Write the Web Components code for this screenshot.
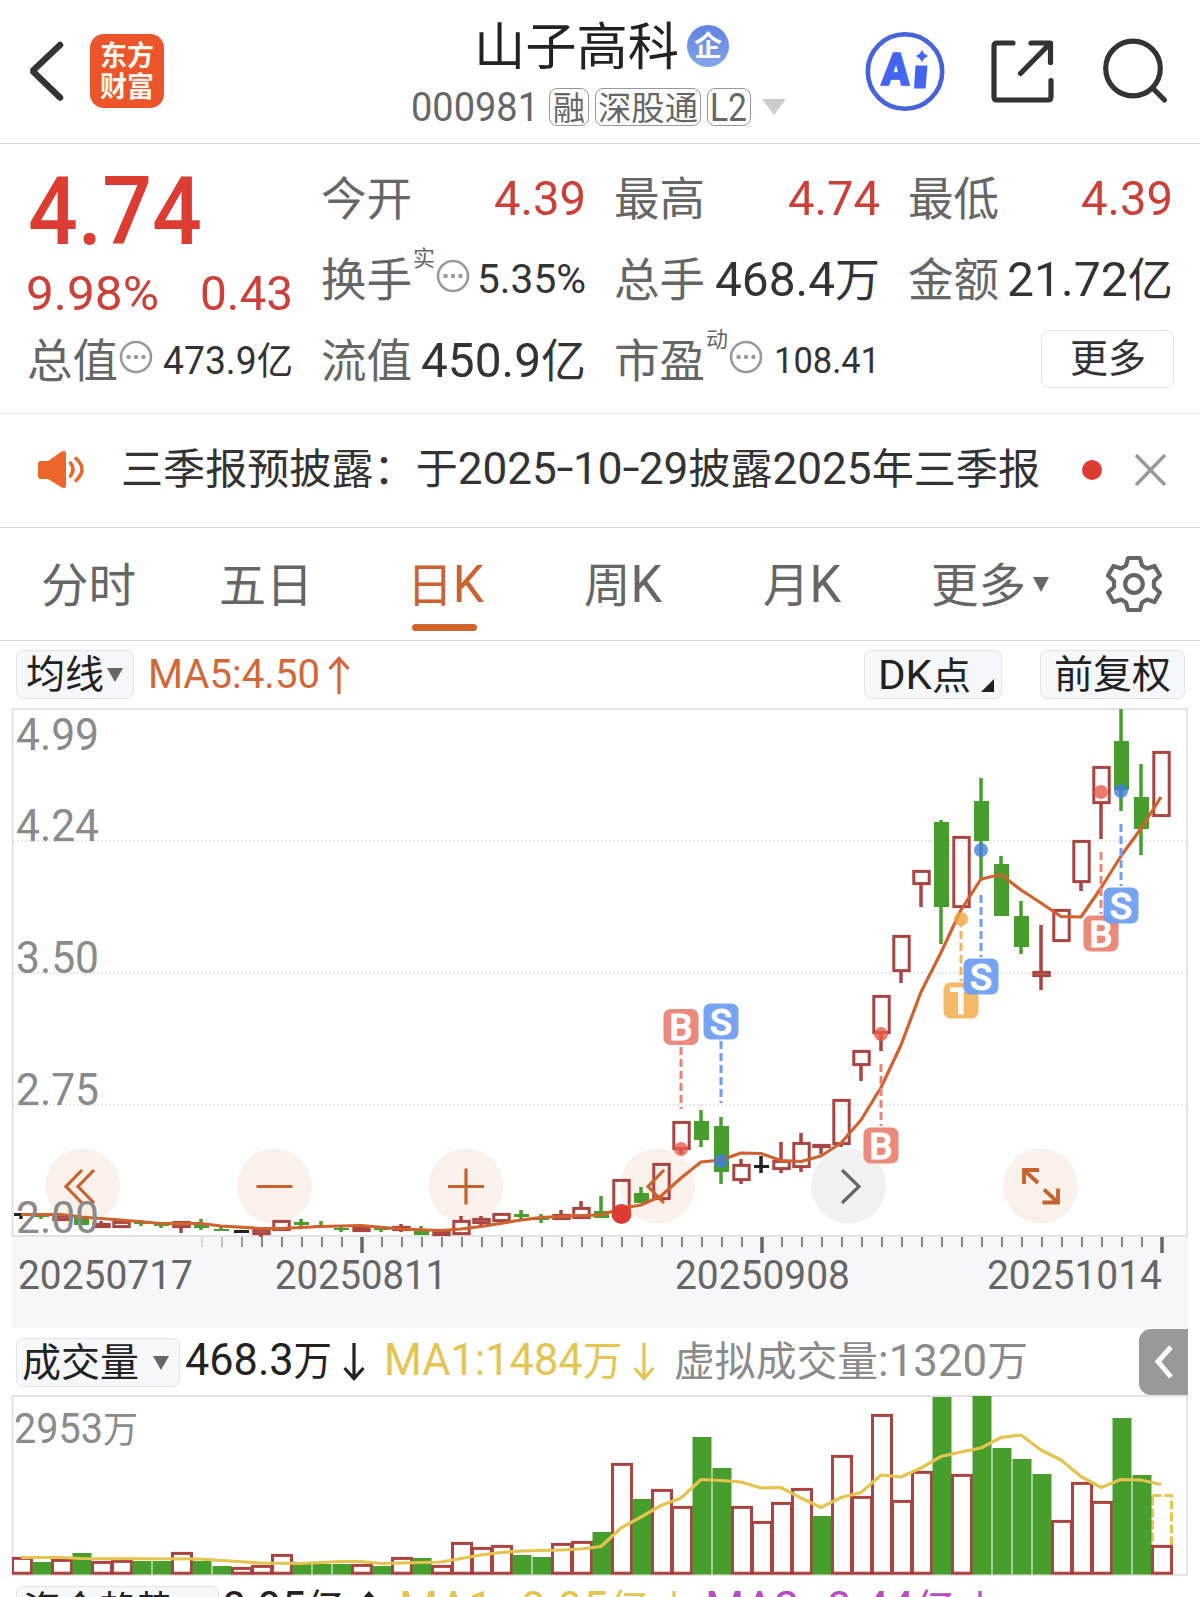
<!DOCTYPE html>
<html lang="zh-CN">
<head>
<meta charset="UTF-8">
<title>山子高科 000981</title>
<style>
  body {
    margin: 0;
    width: 1200px;
    height: 1597px;
    overflow: hidden;
    background: #fff;
    color: #333;
    font-family: Roboto, "Noto Sans CJK SC", sans-serif;
  }
</style>
</head>
<body>
<stock-app></stock-app>

<script>
const define = (name, cls) => window.customElements.define(name, cls);

// Text set to an exact line width. Digits and latin letters are drawn slightly
// larger than the Chinese characters beside them.
class FitText extends HTMLElement {
  constructor() {
    super();
    this.attachShadow({ mode: "open" });
  }
  connectedCallback() {
    const w = +this.getAttribute("w");
    const size = +this.getAttribute("size");
    const latin = +(this.getAttribute("latin") || size);
    const source = this.getAttribute("text");
    const parts = source.split(/([\x20-\x7e]+)/).filter(Boolean);
    const dy = this.getAttribute("dy") || (/[\x20-\x7e]/.test(source) ? 0 : size * 0.028);
    const mark = p => `<span class="latin">${p.replace(/-/g, '<span class="dash">-</span>')}</span>`;
    this.shadowRoot.innerHTML = `
      <style>
        :host { display: inline-block; flex: none; width: ${w}px; height: ${size}px; white-space: nowrap; line-height: ${size}px; font-size: ${size}px; }
        .line { display: inline-block; transform-origin: 0 50%; }
        .latin { font-size: ${latin}px; line-height: 0; }
        .dash { display: inline-block; padding: 0 .045em; transform: translateY(-.03em) scaleX(1.4); }
      </style>
      <span class="line">${parts.map(p => /[\x20-\x7e]/.test(p) ? mark(p) : p).join("")}</span>
    `;
    const line = this.shadowRoot.querySelector(".line");
    line.style.transform = `translateY(${dy}px) scaleX(${w / line.getBoundingClientRect().width})`;
  }
}
define("fit-text", FitText);

class StockHeader extends HTMLElement {
  constructor() {
    super();
    this.attachShadow({ mode: "open" }).innerHTML = `
      <style>
        :host { display: flex; height: 144px; border-bottom: 1px solid #d6d6d6; box-sizing: border-box; color: #222; }
        .left { display: flex; align-items: center; width: 400px; padding: 0 0 1px 26px; box-sizing: border-box; }
        .logo { display: grid; place-content: center; justify-items: center; gap: 3px; width: 74px; height: 74px; margin-left: 22px; border-radius: 14px; background: #eb5529; color: #fff8ef; font-weight: 700; }
        .mid { width: 400px; }
        .name { display: flex; align-items: center; height: 54px; padding: 19px 0 0 74px; }
        .badge { display: grid; place-items: center; width: 42px; height: 42px; margin-left: 8px; border-radius: 50%; background: linear-gradient(#6080e0, #83a6e9); color: #fff; font-weight: 700; }
        .code { display: flex; align-items: center; height: 40px; padding: 14px 0 0 11px; color: #666; }
        .tag { display: grid; place-items: center; height: 36px; border: 1.5px solid #999; border-radius: 8px; margin-right: 6px; }
        .right { display: flex; align-items: center; padding-left: 64px; }
      </style>
      <div class="left">
        <svg width="42" height="62" viewBox="26.500 40 42 62" fill="none" stroke="#333" stroke-width="6.5" stroke-linecap="round" stroke-linejoin="bevel"><path d="M60.5 45 33 71 60.5 97.5"/></svg>
        <div class="logo"><fit-text text="东方" size="28" w="54"></fit-text><fit-text text="财富" size="28" w="54"></fit-text></div>
      </div>
      <div class="mid">
        <div class="name"><fit-text text="山子高科" size="51" w="205" dy="0.5"></fit-text><div class="badge"><fit-text text="企" size="28" w="28"></fit-text></div></div>
        <div class="code">
          <fit-text text="000981" size="41" w="128"></fit-text>
          <div class="tag" style="width:38px;margin-left:9.500px"><fit-text text="融" size="33" w="32"></fit-text></div>
          <div class="tag" style="width:104px"><fit-text text="深股通" size="33" w="100"></fit-text></div>
          <div class="tag" style="width:42px;margin-right:11px"><fit-text text="L2" size="38" w="37"></fit-text></div>
          <svg width="24" height="16"><path d="M0 0h24L12 16z" fill="#ccc"/></svg>
        </div>
      </div>
      <div class="right">
        <svg width="310" height="86" viewBox="864 28.500 310 86" fill="none" stroke="#333" stroke-width="5.2">
          <circle cx="905" cy="71" r="37.2" stroke="#4763d6" stroke-width="4.6"/>
          <text x="881" y="85" textLength="28" lengthAdjust="spacingAndGlyphs" font-size="45" font-weight="900" fill="#4364f0" stroke="#4364f0" stroke-width="1.500" transform="skewX(-3) translate(4.5 0)">A</text>
          <path d="M915.500 65H927.500L925.500 88H914z" fill="#4364f0" stroke="none"/>
          <path d="M922 49q1.500 5 6.500 6.500-5 1.500-6.500 6.500-1.500-5-6.500-6.500 5-1.500 6.500-6.500z" fill="#4364f0" stroke="none"/>
          <g stroke-linecap="round" stroke-linejoin="round">
            <path d="M1013 42.500H997q-3 0-3 3V96.500q0 3 3 3h51q3 0 3-3V80M1031 42.500h19.500V62M1050 43 1020.500 73"/>
            <circle cx="1133" cy="68" r="27.300"/>
            <path d="M1153 88l11.500 11.500"/>
          </g>
        </svg>
      </div>
    `;
  }
}
define("stock-header", StockHeader);

// One label / value pair of the quote table
class QuoteCell extends HTMLElement {
  constructor() {
    super();
    this.attachShadow({ mode: "open" });
  }
  connectedCallback() {
    const a = n => this.getAttribute(n);
    this.shadowRoot.innerHTML = `
      <style>
        :host { display: flex; align-items: center; height: 81px; color: #333; }
        .label { color: #666; margin: -1px 0 0 -0.500px; }
        .note { color: #666; align-self: flex-start; margin: 8px 0 0 1px; }
        svg { margin: -7px 0 0 1px; flex: none; }
        .value { margin-left: auto; }
        .up { color: #cb4038; }
      </style>
      <fit-text class="label" text="${a("label")}" size="46" w="91"></fit-text>
      ${a("note") ? `<fit-text class="note" text="${a("note")}" size="22" w="22"></fit-text>` : ""}
      ${this.hasAttribute("info") ? `<svg width="34" height="34" fill="#999"><circle cx="17" cy="17" r="15" fill="none" stroke="#999" stroke-width="2.600"/><circle cx="9.600" cy="17" r="2.200"/><circle cx="17" cy="17" r="2.200"/><circle cx="24.400" cy="17" r="2.200"/></svg>` : ""}
      <fit-text class="value ${a("tone") || ""}" text="${a("value")}" size="${a("size") || 46}" latin="${a("latin") || 49}" w="${a("w")}"></fit-text>
    `;
  }
}
define("quote-cell", QuoteCell);

class StockQuote extends HTMLElement {
  constructor() {
    super();
    this.attachShadow({ mode: "open" }).innerHTML = `
      <style>
        :host { display: grid; grid-template-columns: repeat(4, 265px); column-gap: 28.500px; grid-auto-rows: 81px; height: 270px; padding: 14px 26px 0 27.500px; box-sizing: border-box; border-bottom: 1.500px solid #ebebeb; }
        .price { grid-row: span 2; color: #dc3c32; }
        .big { display: flex; align-items: center; height: 107px; font-weight: 500; }
        .chg { display: flex; align-items: center; justify-content: space-between; height: 56px; color: #cb4038; }
        .more { display: grid; place-items: center; align-self: start; justify-self: end; width: 131px; height: 56px; margin: 10px -1px 0 0; border: 1.500px solid #e3e3e3; border-radius: 8px; }
      </style>
      <div class="price">
        <div class="big"><fit-text text="4.74" size="94" w="174"></fit-text></div>
        <div class="chg"><fit-text text="9.98%" size="49" w="133" style="margin-left:-2px"></fit-text><fit-text text="0.43" size="49" w="93"></fit-text></div>
      </div>
      <quote-cell label="今开" value="4.39" tone="up" w="92"></quote-cell>
      <quote-cell label="最高" value="4.74" tone="up" w="92"></quote-cell>
      <quote-cell label="最低" value="4.39" tone="up" w="92"></quote-cell>
      <quote-cell label="换手" note="实" info value="5.35%" size="41" latin="41" w="109"></quote-cell>
      <quote-cell label="总手" value="468.4万" w="165"></quote-cell>
      <quote-cell label="金额" value="21.72亿" w="166"></quote-cell>
      <quote-cell label="总值" info value="473.9亿" size="38" latin="39" w="130"></quote-cell>
      <quote-cell label="流值" value="450.9亿" w="165"></quote-cell>
      <quote-cell label="市盈" note="动" info value="108.41" size="37" latin="37" w="106"></quote-cell>
      <div class="more"><fit-text text="更多" size="39" w="76" dy="-0.5"></fit-text></div>
    `;
  }
}
define("stock-quote", StockQuote);

class NoticeBar extends HTMLElement {
  constructor() {
    super();
    this.attachShadow({ mode: "open" }).innerHTML = `
      <style>
        :host { display: flex; align-items: center; height: 114px; box-sizing: border-box; padding: 0 34px 2px 36px; border-bottom: 1px solid #d6d8da; }
        fit-text { margin-left: 35px; }
        .dot { width: 20px; height: 20px; margin: 0 33px 0 auto; border-radius: 50%; background: #dc3c32; }
      </style>
      <svg width="50" height="42" viewBox="36 449 50 42" fill="none" stroke="#ec662c" stroke-width="3.600" stroke-linecap="round">
        <path d="M41 461h7l13-9q5-3 5 2v31q0 5-5 2l-13-8h-7q-3 0-3-3v-12q0-3 3-3z" fill="#ec662c" stroke="none"/>
        <path d="M70.500 463q5 6.500 0 13M76 458.500q12 11 0 22"/>
      </svg>
      <fit-text text="三季报预披露：于2025-10-29披露2025年三季报" size="42" latin="44" w="919"></fit-text>
      <div class="dot"></div>
      <svg width="31" height="32" stroke="#999" stroke-width="3.500"><path d="M1 1 30 31M30 1 1 31"/></svg>
    `;
  }
}
define("notice-bar", NoticeBar);

class PeriodTabs extends HTMLElement {
  constructor() {
    super();
    const tabs = [["分时", 41, 95], ["五日", 219, 94], ["日K", 407, 77], ["周K", 584, 78], ["月K", 763, 78], ["更多", 931, 95]];
    let x = 0;
    this.attachShadow({ mode: "open" }).innerHTML = `
      <style>
        :host { display: flex; align-items: center; height: 113px; box-sizing: border-box; border-bottom: 1px solid #d6d8da; color: #666; }
        .tab { position: relative; height: 48px; display: flex; }
        .active { color: #cb622f; }
        .active::after { content: ""; position: absolute; left: 5px; bottom: -23px; width: 65px; height: 7px; border-radius: 4px; background: #d0622c; }
      </style>
      ${tabs.map(([text, left, w]) => {
        const gap = left - x;
        x = left + w;
        return `<div class="tab ${text === "日K" ? "active" : ""}" style="margin-left:${gap}px"><fit-text text="${text}" size="47" latin="51" w="${w}" dy="1.5"></fit-text></div>`;
      }).join("")}
      <svg width="18" height="15" style="margin-left:6px"><path d="M1 0h16L9 15z" fill="#666"/></svg>
      <svg width="60" height="60" viewBox="-30 -30 60 60" style="margin-left:54px" fill="none" stroke="#666" stroke-width="4.200" stroke-linejoin="round">
        <path d="M-6-26H6L8-18.500 13-15.500 20.500-18 26-8.500 20-3V3L26 8.500 20.500 18 13 15.500 8 18.500 6 26H-6L-8 18.500-13 15.500-20.500 18-26 8.500-20 3V-3L-26-8.500-20.500-18-13-15.500-8-18.500z"/>
        <circle r="8.800"/>
      </svg>
    `;
  }
}
define("period-tabs", PeriodTabs);

// Grey pill button used above the charts
class PillButton extends HTMLElement {
  constructor() {
    super();
    this.attachShadow({ mode: "open" }).innerHTML = `
      <style>
        :host { display: flex; align-items: center; flex: none; box-sizing: border-box; height: 49px; border: 1.500px solid #e1e4e8; border-radius: 7px; background: #f6f7fa; color: #222; }
      </style>
      <slot></slot>
    `;
  }
}
define("pill-button", PillButton);

const down = '<svg width="16" height="14" style="flex:none"><path d="M0 0h16L8 14z" fill="#666"/></svg>';
const arrow = (color, up) => `<svg class="arrow" width="22" height="38" fill="none" stroke="${color}" stroke-width="3.200"><path d="${up ? "M11 38V3M1.500 13 11 2.500 20.500 13" : "M11 0V35M1.500 25 11 35.500 20.500 25"}"/></svg>`;

class ChartToolbar extends HTMLElement {
  constructor() {
    super();
    this.attachShadow({ mode: "open" }).innerHTML = `
      <style>
        :host { display: flex; align-items: center; height: 67px; box-sizing: border-box; padding: 0 15px 0 16px; }
        .ma { margin-left: 14px; color: #d2683a; }
        .arrow { margin: 0 0 0 8px; }
        .dk { margin-left: auto; }
        .corner { align-self: flex-end; margin: 0 0 6px 10px; }
      </style>
      <pill-button style="width:118px;padding-left:9px"><fit-text text="均线" size="39" w="78"></fit-text><span style="margin:1px 0 0 3px;line-height:0">${down}</span></pill-button>
      <fit-text class="ma" text="MA5:4.50" size="41" w="172" dy="-0.5"></fit-text>
      ${arrow("#d2683a", true)}
      <pill-button class="dk" style="width:138px;padding-left:13px"><fit-text text="DK点" size="38" latin="41" w="93" dy="0.5"></fit-text><svg class="corner" width="13" height="13"><path d="M13 0v13H0z" fill="#222"/></svg></pill-button>
      <pill-button style="width:145px;margin-left:38.500px;padding-left:13px"><fit-text text="前复权" size="39" w="117"></fit-text></pill-button>
    `;
  }
}
define("chart-toolbar", ChartToolbar);

const RED = "#a94440";
const GREEN = "#489e2d";
const cx = i => 21.5 + 20 * i;
const polyline = (pts, stroke) => `<polyline points="${pts.map(([i, y]) => `${cx(i) - 0.5},${y}`).join(" ")}" fill="none" stroke="${stroke}" stroke-width="3.200" stroke-linejoin="round"/>`;

// type, body top, body bottom, wick high, wick low
// r = rising (hollow), g = falling, k = unchanged
const candles = [
  ["k", 1213, 1216, 1213, 1219], ["g", 1214, 1217, 1214, 1219], ["r", 1215, 1221], ["g", 1217, 1225],
  ["r", 1223, 1228, 1221, 1228], ["r", 1221, 1228], ["g", 1222, 1224, 1220, 1226], ["g", 1224, 1226, 1223, 1228],
  ["r", 1221, 1228, 1221, 1233], ["g", 1223, 1228, 1219, 1230], ["g", 1229, 1231, 1226, 1231], ["k", 1230, 1233],
  ["r", 1229, 1235, 1229, 1237], ["r", 1220, 1231], ["g", 1222, 1225, 1219, 1226], ["g", 1225, 1227, 1221, 1227],
  ["g", 1228, 1230, 1226, 1232], ["r", 1227, 1232], ["g", 1228, 1230, 1226, 1232], ["r", 1226, 1231, 1224, 1232],
  ["g", 1229, 1235, 1226, 1235], ["r", 1231, 1236], ["r", 1220, 1235, 1216, 1235], ["r", 1218, 1224, 1216, 1226],
  ["r", 1213, 1222], ["g", 1214, 1217, 1210, 1220], ["g", 1217, 1220, 1214, 1223], ["r", 1214, 1220, 1210, 1220],
  ["r", 1207, 1219, 1201, 1219], ["g", 1211, 1218, 1196, 1218], ["r", 1179, 1212], ["g", 1193, 1203, 1187, 1203],
  ["r", 1163, 1200], ["r", 1121, 1150, 1121, 1154], ["g", 1121, 1140, 1110, 1147], ["g", 1126, 1172, 1117, 1184],
  ["r", 1164, 1181, 1159, 1184], ["k", 1165, 1168, 1156, 1173], ["r", 1160, 1170, 1142, 1173], ["r", 1142, 1168, 1133, 1172],
  ["r", 1144, 1148, 1144, 1154], ["r", 1099, 1145, 1099, 1147], ["r", 1050, 1066, 1050, 1081], ["r", 995, 1034, 995, 1051],
  ["r", 935, 972, 935, 983], ["r", 870, 885, 870, 907], ["g", 822, 907, 820, 944], ["r", 836, 908],
  ["g", 801, 841, 778, 881], ["g", 864, 916, 856, 916], ["g", 916, 947, 901, 954], ["r", 971, 977, 925, 990],
  ["r", 909, 942], ["r", 840, 883, 840, 891], ["r", 766, 804, 766, 839], ["g", 741, 790, 709, 811],
  ["g", 797, 829, 764, 855], ["r", 751, 817],
];

const ma5 = [
  [0, 1214.5], [2, 1214.5], [3, 1217], [5, 1220], [7, 1223.5], [9, 1223.5], [10, 1226], [12, 1228.5], [13, 1228.5], [15, 1226.5],
  [17, 1225.5], [19, 1229], [21, 1230.5], [22, 1229], [23, 1226.5], [25, 1220], [26, 1217.5], [28, 1215.5], [29, 1215],
  [30, 1208.5], [31, 1205], [32, 1196], [33, 1178], [34, 1162], [35, 1160], [36, 1153], [37, 1153.5], [38, 1160.5], [39, 1161.5],
  [40, 1156], [41, 1143], [42, 1120], [43, 1087.5], [44, 1045], [45, 992], [46, 952.5], [47, 910], [48, 879], [49, 874.5],
  [50, 890], [51, 903], [52, 916.5], [53, 917], [54, 888], [55, 856], [56, 828.5], [57, 797],
];

// letter, colour, x, centre of the tag, dash from, dash to, point on the candle
const marks = [
  ["B", "#e98475", 681, 1027, 1047, 1109, 1149], ["S", "#6f9ff1", 721, 1021.5, 1041, 1103, 1161],
  ["B", "#e98475", 881, 1145.5, 1064, 1126, 1034], ["T", "#f3b45f", 961, 1000.5, 919, 981, 919],
  ["S", "#6f9ff1", 981, 976.5, 895, 957, 850], ["B", "#e98475", 1101, 933.5, 852, 914, 792],
  ["S", "#6f9ff1", 1121, 905.5, 824, 886, 791],
];
const dotColors = { B: "#ea5a48", S: "#3f80e0", T: "#f2a444" };

class KLineChart extends HTMLElement {
  constructor() {
    super();
    this.attachShadow({ mode: "open" }).innerHTML = `
      <style>
        :host { display: block; height: 620px; }
        svg { display: block; }
      </style>
      <svg width="1200" height="620" viewBox="0 708 1200 620">
        <rect x="12" y="1236" width="1176" height="92" fill="#f7f7fa"/>
        ${this.buttons()}
        <g stroke="#dedede" stroke-width="1.500" stroke-dasharray="2 2"><path d="M13 841H1187M13 973H1187M13 1105H1187"/></g>
        <rect x="12.500" y="709" width="1174.500" height="527" fill="none" stroke="#e2e2e2" stroke-width="1.800"/>
        ${this.ticks()}
        ${candles.map((c, i) => this.candle(c, i)).join("")}
        ${polyline(ma5, "#d0622f")}
        <circle cx="621.500" cy="1214" r="10" fill="#dc3c32"/>
        ${marks.map(m => this.mark(m)).join("")}
        <g fill="none" stroke="#c5632f" stroke-width="3.200">
          <path d="M82 1170 66 1186.500 82 1203M94 1170 78 1186.500 94 1203M256.500 1186.500h36M448 1186.500h36M466 1168.500v36M664 1170 648 1186.500 664 1203"/>
          <path stroke-width="3.800" d="M1024 1184v-14h15M1024 1170l14 13M1058 1188.500v14h-15.500M1058 1202.500l-14-13"/>
          <path d="M842 1170 859 1186.500 842 1203" stroke="#666"/>
        </g>
        ${this.labels()}
      </svg>
    `;
  }
  buttons() {
    return [82.7, 274.5, 466, 657.5, 848.5, 1040.5].map((x, i) => `<circle cx="${x}" cy="1186" r="37.500" fill="${i === 4 ? "#f1f1f1" : "#fbf1eb"}"/>`).join("");
  }
  ticks() {
    let out = "";
    for (let i = 9; i <= 57; i++) {
      const long = i % 20 === 17;
      const fade = i < 12 ? [0.25, 0.5, 0.8][i - 9] : 1;
      out += `<path d="M${cx(i) + 0.5} 1237v${long ? 16 : 10}" stroke="${long ? "#666" : "#888"}" stroke-width="${long ? 3.5 : 2}" opacity="${fade}"/>`;
    }
    return out;
  }
  candle([type, top, bottom, high = top, low = bottom], i) {
    const x = cx(i);
    const color = { r: RED, g: GREEN, k: "#222" }[type];
    const wick = `<path d="M${x - 0.5} ${high}V${top}M${x - 0.5} ${bottom}V${low}" stroke="${color}" stroke-width="3.500"/>`;
    if (type === "r") {
      return wick + `<rect x="${x - 7.7}" y="${top + 1.4}" width="15.400" height="${Math.max(bottom - top - 2.8, 1)}" fill="none" stroke="${color}" stroke-width="3"/>`;
    }
    return wick + `<rect x="${x - 7.5}" y="${top}" width="15" height="${bottom - top}" fill="${color}"/>`;
  }
  mark([letter, color, x, y, from, to, dot]) {
    return `
      <circle cx="${x}" cy="${dot}" r="7" fill="${dotColors[letter]}" opacity=".8"/>
      <path d="M${x} ${from}V${to}" stroke="${color}" stroke-width="3" stroke-dasharray="8 4"/>
      <rect x="${x - 17.5}" y="${y - 18}" width="35" height="36" rx="7" fill="${color}" opacity=".95"/>
      <text x="${x}" y="${y + 13}" text-anchor="middle" font-weight="500" font-size="37" fill="#fff" stroke="#fff" stroke-width=".8">${letter}</text>
    `;
  }
  labels() {
    const text = (s, x, y, w, color, size) => `<text x="${x}" y="${y}" textLength="${w}" lengthAdjust="spacingAndGlyphs" font-size="${size}" fill="${color}">${s}</text>`;
    return [["4.99", 749.5], ["4.24", 841], ["3.50", 973], ["2.75", 1104.5], ["2.00", 1232.5]].map(([s, y]) => text(s, 16, y, 83, "#8a8a8a", 43.5)).join("")
      + [["20250717", 18, 175], ["20250811", 275, 172], ["20250908", 675, 175], ["20251014", 987, 175]].map(([s, x, w]) => text(s, x, 1289, w, "#666", 41.5)).join("");
  }
}
define("k-line-chart", KLineChart);

class VolumeHeader extends HTMLElement {
  constructor() {
    super();
    this.attachShadow({ mode: "open" }).innerHTML = `
      <style>
        :host { display: flex; align-items: center; height: 68px; box-sizing: border-box; padding: 0 12px 0 16px; color: #222; }
        .arrow { margin-left: 11px; }
        .fold { display: grid; place-items: center; width: 49px; height: 66px; margin-left: auto; border-radius: 12px 0 0 12px; background: #999; }
      </style>
      <pill-button style="width:164px;padding-left:5px"><fit-text text="成交量" size="39" w="117" dy="0.5"></fit-text><span style="margin:1px 0 0 14px;line-height:0">${down}</span></pill-button>
      <fit-text text="468.3万" size="40" latin="45" w="147" style="margin-left:5px"></fit-text>
      ${arrow("#222")}
      <fit-text text="MA1:1484万" size="40" latin="44" w="238" style="margin-left:19px;color:#e4c452"></fit-text>
      ${arrow("#e4c452")}
      <fit-text text="虚拟成交量:1320万" size="41" latin="44" w="354" style="margin-left:19px;color:#8a8a8a"></fit-text>
      <div class="fold"><svg width="20" height="36" fill="none" stroke="#fff" stroke-width="5"><path d="M17 3 4 17.500 17 33"/></svg></div>
    `;
  }
}
define("volume-header", VolumeHeader);

const volumes = [
  ["r", 1557], ["g", 1562], ["r", 1559], ["g", 1553], ["r", 1561], ["r", 1560], ["g", 1561], ["g", 1561], ["r", 1552], ["g", 1561],
  ["g", 1566], ["r", 1567], ["r", 1565], ["r", 1554], ["g", 1564], ["g", 1564], ["g", 1564], ["r", 1564], ["g", 1566], ["r", 1557],
  ["g", 1558], ["r", 1565], ["r", 1542], ["r", 1547], ["r", 1545], ["g", 1555], ["g", 1557], ["r", 1543], ["r", 1541], ["g", 1532],
  ["r", 1463], ["g", 1499], ["r", 1489], ["r", 1506], ["g", 1437], ["g", 1468], ["r", 1506], ["r", 1521], ["r", 1502], ["r", 1488],
  ["g", 1516], ["r", 1455], ["r", 1496], ["r", 1414], ["r", 1500], ["r", 1471], ["g", 1397], ["r", 1474], ["g", 1396], ["g", 1448],
  ["g", 1459], ["g", 1474], ["r", 1520], ["r", 1482], ["r", 1501], ["g", 1418], ["g", 1475], ["r", 1545],
];

const volumeMa = [
  [0, 1557.5], [2, 1557.5], [3, 1558.5], [9, 1559], [10, 1560.5], [12, 1563], [14, 1563.5], [16, 1561.5], [17, 1561.5], [18, 1563.5],
  [19, 1563], [20, 1562.5], [21, 1562], [22, 1558.5], [23, 1555], [24, 1552.5], [25, 1551], [27, 1550], [28, 1549], [29, 1546.5],
  [30, 1528], [31, 1517], [32, 1505.5], [33, 1498], [34, 1479.5], [35, 1480.5], [36, 1482], [37, 1488], [38, 1487.5], [39, 1498],
  [40, 1507.5], [41, 1497.5], [42, 1492.5], [43, 1475], [44, 1477], [45, 1468], [46, 1456.5], [47, 1452], [48, 1448], [49, 1437.5],
  [50, 1435], [51, 1450], [52, 1460], [53, 1476.5], [54, 1487.5], [55, 1479.5], [56, 1480], [57, 1484.5],
];

class VolumeChart extends HTMLElement {
  constructor() {
    super();
    this.attachShadow({ mode: "open" }).innerHTML = `
      <style>
        :host { display: block; height: 180px; }
        svg { display: block; overflow: visible; }
      </style>
      <svg width="1200" height="180" viewBox="0 1396 1200 180">
        <rect x="12.500" y="1396" width="1174.500" height="179" fill="none" stroke="#e2e2e2" stroke-width="1.800"/>
        <clipPath id="plot"><rect x="12" y="1396" width="1177" height="180"/></clipPath>
        <g clip-path="url(#plot)">
          <rect x="1152.500" y="1495.500" width="19" height="52" fill="none" stroke="#e4c452" stroke-width="3" stroke-dasharray="9 3"/>
          ${volumes.map(([type, y], i) => type === "r"
            ? `<rect x="${cx(i) - 9}" y="${y + 1.4}" width="19" height="${1573.2 - y - 1.4}" fill="#fff" stroke="${RED}" stroke-width="3"/>`
            : `<rect x="${cx(i) - 9}" y="${y}" width="19" height="${1574.5 - y}" fill="${GREEN}"/>`).join("")}
          ${polyline(volumeMa, "#e4c34f")}
        </g>
        <text x="14" y="1443" textLength="124" lengthAdjust="spacingAndGlyphs" font-size="42" fill="#8a8a8a">2953<tspan font-size="37">万</tspan></text>
      </svg>
    `;
  }
}
define("volume-chart", VolumeChart);

class FundHeader extends HTMLElement {
  constructor() {
    super();
    this.attachShadow({ mode: "open" }).innerHTML = `
      <style>
        :host { display: flex; align-items: center; height: 68px; box-sizing: border-box; padding: 0 12px 0 16px; color: #222; }
        .arrow { margin-left: 14px; }
      </style>
      <pill-button style="width:203px;padding-left:6px"><fit-text text="资金趋势" size="39" w="152" dy="0.5"></fit-text><span style="margin:3px 0 0 18px;line-height:0">${down}</span></pill-button>
      <fit-text text="0.95亿" size="40" latin="45" w="122" style="margin-left:3px"></fit-text>
      ${arrow("#222", true)}
      <fit-text text="MA1:-0.95亿" size="40" latin="44" w="250" style="margin-left:19px;color:#e4c452"></fit-text>
      ${arrow("#e4c452")}
      <fit-text text="MA2:-0.44亿" size="40" latin="44" w="250" style="margin-left:20px;color:#b84cc4"></fit-text>
      ${arrow("#b84cc4")}
    `;
  }
}
define("fund-header", FundHeader);

class StockApp extends HTMLElement {
  constructor() {
    super();
    this.attachShadow({ mode: "open" }).innerHTML = `
      <style>
        :host { display: flex; flex-direction: column; width: 1200px; height: 1597px; overflow: hidden; background: #fff; }
        :host > * { flex: none; }
      </style>
      <stock-header></stock-header>
      <stock-quote></stock-quote>
      <notice-bar></notice-bar>
      <period-tabs></period-tabs>
      <chart-toolbar></chart-toolbar>
      <k-line-chart></k-line-chart>
      <volume-header></volume-header>
      <volume-chart></volume-chart>
      <fund-header></fund-header>
    `;
  }
}
define("stock-app", StockApp);
</script>
</body>
</html>
